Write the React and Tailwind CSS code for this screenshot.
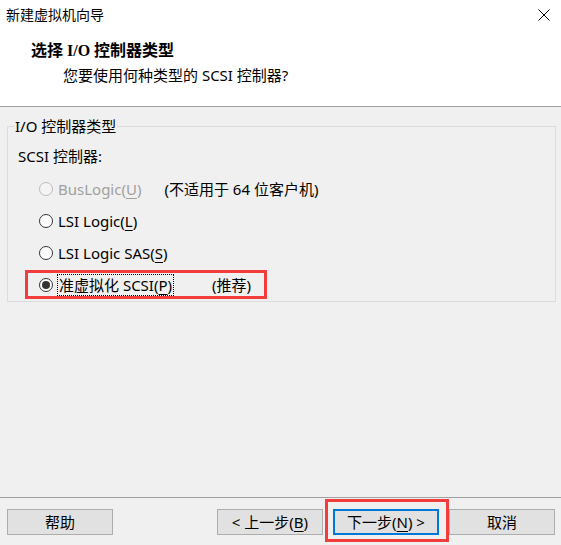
import React from 'react';

const ui = "font-['Noto_Sans','Noto_Sans_CJK_SC',sans-serif]";

function Radio({ checked, disabled }) {
  return (
    <span
      className={`flex items-center justify-center w-[14px] h-[14px] rounded-full border shrink-0 ${
        disabled ? 'border-[#bcbcbc] bg-[#f4f4f4]' : 'border-[#333333] bg-white'
      }`}
    >
      {checked && <span className="w-[8px] h-[8px] rounded-full bg-[#333333]" />}
    </span>
  );
}

function Key({ children }) {
  return <span className="underline decoration-1 underline-offset-[3px]">{children}</span>;
}

function Btn({ children, primary }) {
  return (
    <button
      className={`w-[106px] h-[26px] bg-[#e1e1e1] text-[15px] leading-none text-black ${
        primary ? 'border-2 border-[#0078d7]' : 'border border-[#adadad]'
      }`}
    >
      {children}
    </button>
  );
}

export default function App() {
  return (
    <div className={`w-[561px] h-[545px] flex flex-col bg-[#f0f0f0] overflow-hidden text-black ${ui}`}>
      {/* Header */}
      <div className="h-[107px] bg-white border-b border-[#a0a0a0]">
        <div className="h-[30px] flex items-center justify-between pl-[6px] pr-[11px]">
          <span className="text-[14px] leading-[20px]">新建虚拟机向导</span>
          <svg width="12" height="12" viewBox="0 0 12 12" className="text-black">
            <path d="M0.5 0.5 L11.5 11.5 M11.5 0.5 L0.5 11.5" stroke="currentColor" strokeWidth="1" fill="none" />
          </svg>
        </div>
        <div className="mt-[11px] pl-[31px] leading-[20px] text-[16px] font-bold font-['Liberation_Serif','Noto_Sans_CJK_SC',serif]">
          选择 I/O 控制器类型
        </div>
        <div className="mt-[4px] pl-[63px] leading-[20px] text-[15px]">您要使用何种类型的 SCSI 控制器?</div>
      </div>

      {/* Body */}
      <div className="flex-1 pt-[9px]">
        <fieldset className="ml-[7px] w-[549px] border border-[#dcdcdc] px-0 pb-0">
          <legend className="ml-[6px] px-[1px] text-[15px] leading-[20px]">I/O 控制器类型</legend>
          <div className="pl-[10px] mt-[10px] text-[15px] leading-[20px]">SCSI 控制器:</div>
          <div className="mt-[7px] text-[15px]">
            <div className="h-[32px] flex items-center pl-[31px]">
              <Radio disabled />
              <span className="ml-[5px] text-[#a0a0a0]">
                BusLogic(<Key>U</Key>)
              </span>
              <span className="ml-[23px]">(不适用于 64 位客户机)</span>
            </div>
            <div className="h-[32px] flex items-center pl-[31px]">
              <Radio />
              <span className="ml-[5px]">
                LSI Logic(<Key>L</Key>)
              </span>
            </div>
            <div className="h-[32px] flex items-center pl-[31px]">
              <Radio />
              <span className="ml-[5px]">
                LSI Logic SAS(<Key>S</Key>)
              </span>
            </div>
            <div className="relative h-[32px] flex items-center pl-[31px]">
              <Radio checked />
              <span className="ml-[4px] px-[1px] border border-dotted border-black leading-[20px]">
                准虚拟化 SCSI(<Key>P</Key>)
              </span>
              <span className="ml-[38px]">(推荐)</span>
              <span className="absolute left-[17px] top-[1px] w-[242px] h-[29px] border-[3px] border-[#f23d3d] pointer-events-none" />
            </div>
          </div>
        </fieldset>
      </div>

      {/* Footer */}
      <div className="h-[48px] border-t border-[#a0a0a0] pt-[11px] pl-[7px] pr-[6px] flex items-start justify-between">
        <Btn>帮助</Btn>
        <div className="flex gap-[10px]">
          <Btn>
            &lt; 上一步(<Key>B</Key>)
          </Btn>
          <div className="relative">
            <Btn primary>
              下一步(<Key>N</Key>) &gt;
            </Btn>
            <span className="absolute -left-[8px] -top-[10px] w-[124px] h-[43px] border-[3px] border-[#f23d3d] pointer-events-none" />
          </div>
          <Btn>取消</Btn>
        </div>
      </div>
    </div>
  );
}
